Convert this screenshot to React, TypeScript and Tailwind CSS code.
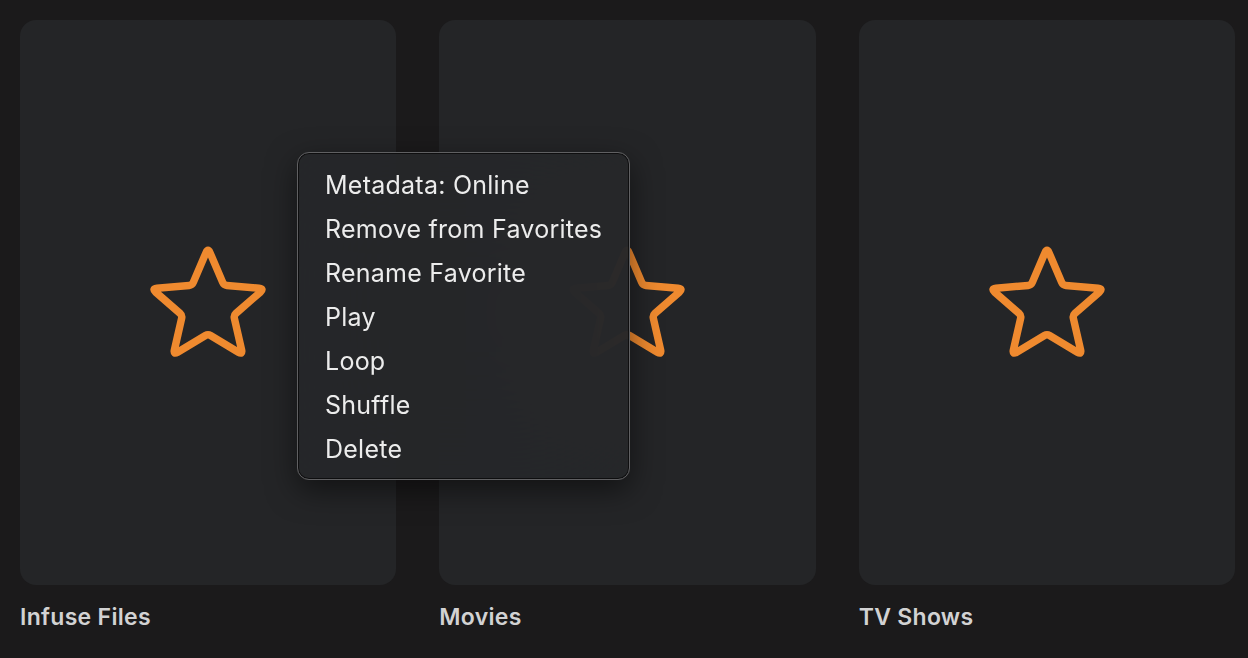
const tiles = ['Infuse Files', 'Movies', 'TV Shows'];

const menuItems = [
  'Metadata: Online',
  'Remove from Favorites',
  'Rename Favorite',
  'Play',
  'Loop',
  'Shuffle',
  'Delete',
];

// rounded star outline path
function starPath() {
  const cx = 60;
  const cy = 64;
  const R = 59;
  const r = 27;
  const pts: [number, number][] = [];
  for (let i = 0; i < 10; i++) {
    const rad = i % 2 === 0 ? R : r;
    const a = (-90 + i * 36) * (Math.PI / 180);
    pts.push([cx + rad * Math.cos(a), cy + rad * Math.sin(a)]);
  }
  const f = (n: number) => n.toFixed(2);
  let d = '';
  pts.forEach((p, i) => {
    const prev = pts[(i + 9) % 10];
    const next = pts[(i + 1) % 10];
    const cut = i % 2 === 0 ? 5 : 3;
    const toward = (q: [number, number]) => {
      const dx = q[0] - p[0];
      const dy = q[1] - p[1];
      const len = Math.hypot(dx, dy);
      return [p[0] + (dx / len) * cut, p[1] + (dy / len) * cut];
    };
    const a = toward(prev);
    const b = toward(next);
    d += `${i === 0 ? 'M' : 'L'}${f(a[0])},${f(a[1])} Q${f(p[0])},${f(p[1])} ${f(b[0])},${f(b[1])} `;
  });
  return d + 'Z';
}

const STAR = starPath();

function StarIcon() {
  return (
    <svg width="124" height="124" viewBox="-2 -2 124 124" fill="none">
      <path d={STAR} stroke="#ef8a2f" strokeWidth="7.5" strokeLinejoin="round" />
    </svg>
  );
}

export default function App() {
  return (
    <div
      className="relative w-[1248px] h-[658px] overflow-hidden bg-[#1b1a1b]"
      style={{ fontFamily: 'Inter, "Noto Sans", sans-serif' }}
    >
      <div className="grid grid-cols-3 gap-[43px] pl-[20px] pr-[13px] pt-[20px]">
        {tiles.map((t) => (
          <div key={t} className="flex flex-col">
            <div className="h-[565px] rounded-[16px] bg-[#242527] flex items-center justify-center">
              <StarIcon />
            </div>
            <div className="mt-[18px] text-[23px] leading-[28px] font-semibold tracking-[0.3px] text-[#d2d2d3]">{t}</div>
          </div>
        ))}
      </div>

      {/* context menu */}
      <div className="absolute left-[297px] top-[152px] w-[333px] h-[328px] rounded-[12px] border border-[#606062] bg-[#262729]/95 backdrop-blur-3xl shadow-[0_10px_30px_rgba(0,0,0,0.5),inset_0_0_0_1px_rgba(0,0,0,0.6)] pt-[11px]">
        {menuItems.map((m) => (
          <div key={m} className="h-[44px] pl-[27px] flex items-center text-[25px] text-[#ececec] tracking-[0.25px]">
            {m}
          </div>
        ))}
      </div>
    </div>
  );
}
